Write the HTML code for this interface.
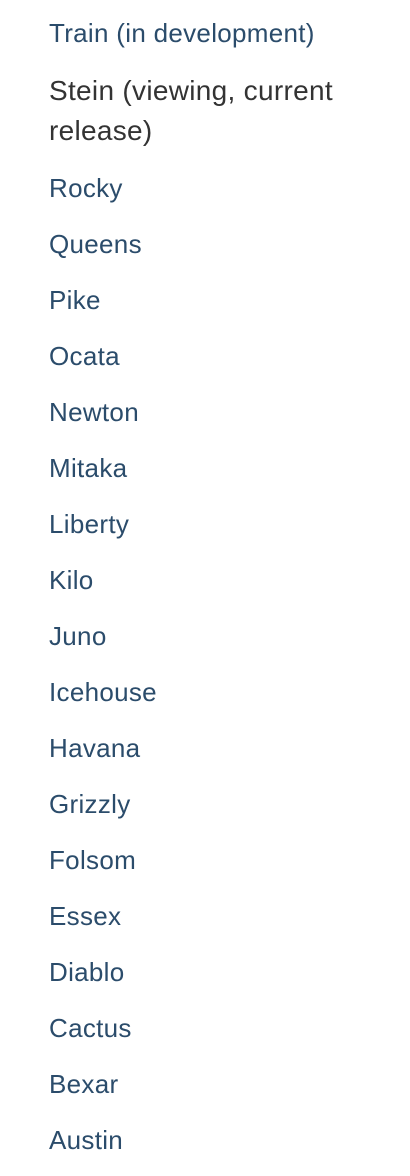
<!DOCTYPE html>
<html><head><meta charset="utf-8"><style>
html,body{margin:0;padding:0;background:#fff;width:410px;height:1176px;overflow:hidden}
body{position:relative;font-family:"Liberation Sans",sans-serif}
.i{position:absolute;left:49px;color:#2b4c6b;font-size:26px;line-height:30px;white-space:nowrap;letter-spacing:0.3px}
.t{font-size:26px}
.s{color:#333;font-size:28px;line-height:40px;white-space:normal;width:330px}
</style></head><body>
<div class="i t" style="top:18px">Train (in development)</div>
<div class="i s" style="top:71px">Stein (viewing, current release)</div>
<div class="i" style="top:173px">Rocky</div>
<div class="i" style="top:229px">Queens</div>
<div class="i" style="top:285px">Pike</div>
<div class="i" style="top:341px">Ocata</div>
<div class="i" style="top:397px">Newton</div>
<div class="i" style="top:453px">Mitaka</div>
<div class="i" style="top:509px">Liberty</div>
<div class="i" style="top:565px">Kilo</div>
<div class="i" style="top:621px">Juno</div>
<div class="i" style="top:677px">Icehouse</div>
<div class="i" style="top:733px">Havana</div>
<div class="i" style="top:789px">Grizzly</div>
<div class="i" style="top:845px">Folsom</div>
<div class="i" style="top:901px">Essex</div>
<div class="i" style="top:957px">Diablo</div>
<div class="i" style="top:1013px">Cactus</div>
<div class="i" style="top:1069px">Bexar</div>
<div class="i" style="top:1125px">Austin</div>
</body></html>
